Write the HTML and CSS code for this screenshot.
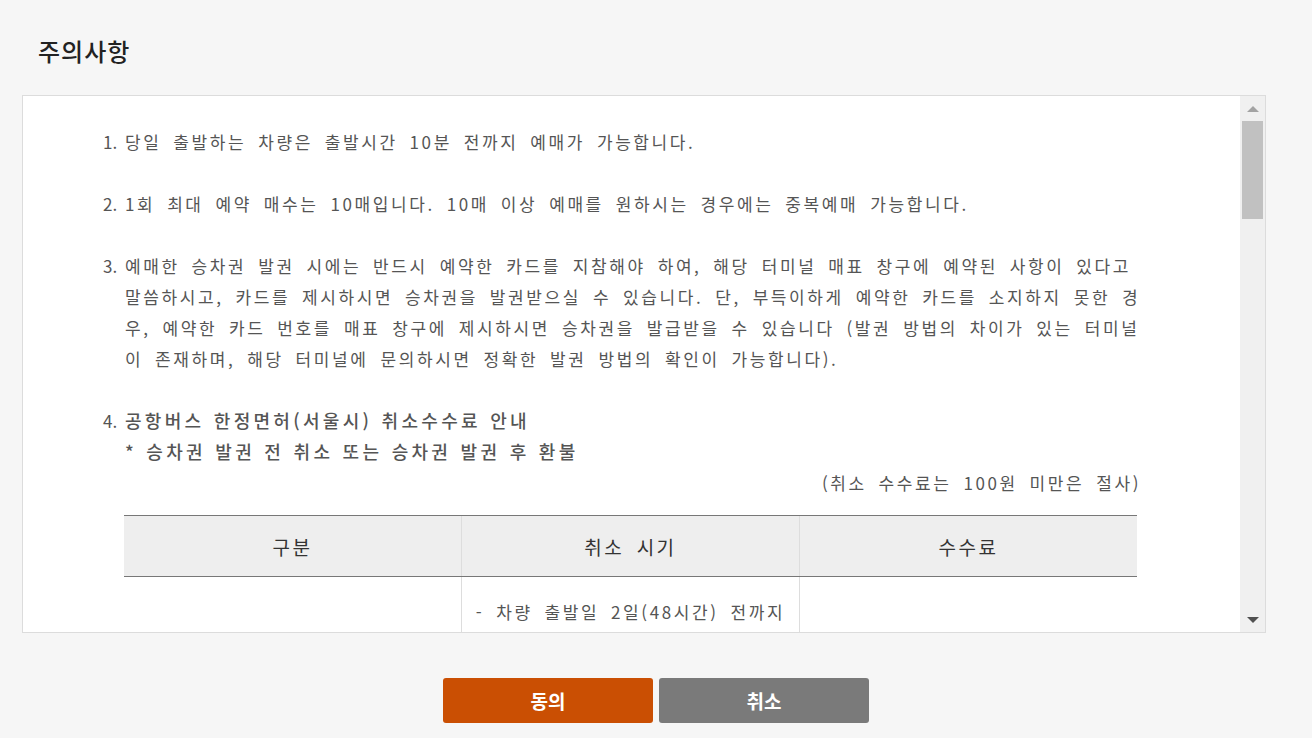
FILE: index.html
```html
<!DOCTYPE html>
<html lang="ko">
<head>
    <meta charset="UTF-8">
    <meta name="viewport" content="width=device-width, initial-scale=1.0">
    <title>주의사항</title>
    <link rel="stylesheet" href="styles.css">
</head>
<body>
    <div class="page">
        <h2 class="title">주의사항</h2>

        <div class="terms-box">
            <div class="terms-body">
                <ol class="terms">
                    <li><span class="num">1.</span><p>당일 출발하는 차량은 출발시간 10분 전까지 예매가 가능합니다.</p></li>
                    <li><span class="num">2.</span><p>1회 최대 예약 매수는 10매입니다. 10매 이상 예매를 원하시는 경우에는 중복예매 가능합니다.</p></li>
                    <li><span class="num">3.</span><p>예매한 승차권 발권 시에는 반드시 예약한 카드를 지참해야 하여, 해당 터미널 매표 창구에 예약된 사항이 있다고<br>말씀하시고, 카드를 제시하시면 승차권을 발권받으실 수 있습니다. 단, 부득이하게 예약한 카드를 소지하지 못한 경<br>우, 예약한 카드 번호를 매표 창구에 제시하시면 승차권을 발급받을 수 있습니다 (발권 방법의 차이가 있는 터미널<br>이 존재하며, 해당 터미널에 문의하시면 정확한 발권 방법의 확인이 가능합니다).</p></li>
                    <li class="fee">
                        <span class="num">4.</span>
                        <div class="fee-body">
                            <p class="fee-title">공항버스 한정면허(서울시) 취소수수료 안내</p>
                            <p class="fee-title">* 승차권 발권 전 취소 또는 승차권 발권 후 환불</p>
                            <div class="fee-detail">
                                <p class="fee-note">(취소 수수료는 100원 미만은 절사)</p>
                                <table class="fee-table">
                                    <thead>
                                        <tr>
                                            <th>구분</th>
                                            <th>취소 시기</th>
                                            <th>수수료</th>
                                        </tr>
                                    </thead>
                                    <tbody>
                                        <tr>
                                            <td></td>
                                            <td>- 차량 출발일 2일(48시간) 전까지</td>
                                            <td></td>
                                        </tr>
                                    </tbody>
                                </table>
                            </div>
                        </div>
                    </li>
                </ol>
            </div>
            <div class="scrollbar">
                <div class="sb-btn"><span class="arrow-up"></span></div>
                <div class="sb-track"><div class="sb-thumb"></div></div>
                <div class="sb-btn"><span class="arrow-down"></span></div>
            </div>
        </div>

        <div class="buttons">
            <button class="btn btn-agree">동의</button>
            <button class="btn btn-cancel">취소</button>
        </div>
    </div>
</body>
</html>
```

FILE: styles.css
```css
body {
    margin: 0;
    padding: 0;
    background-color: #f6f6f6;
    font-family: "Noto Sans CJK KR", "Noto Sans", sans-serif;
    color: #555;
}
.page {
    padding: 0 46px 0 22px;
}
.title {
    margin: 0 0 29px;
    padding: 36px 0 0 16px;
    font-size: 24px;
    line-height: 30px;
    font-weight: 500;
    letter-spacing: 1px;
    color: #222;
}
.terms-box {
    display: flex;
    height: 536px;
    background-color: white;
    border: 1px solid #dcdcdc;
}
.terms-body {
    flex: 1;
    overflow: hidden;
    padding: 30px 0 0 80px;
}
.terms {
    list-style: none;
    margin: 0;
    padding: 0;
    width: 1070px;
}
.terms li {
    display: flex;
    margin-bottom: 31px;
    font-size: 17px;
    line-height: 31px;
    letter-spacing: 2.6px;
    word-spacing: 4.5px;
}
.terms p {
    margin: 0;
}
.num {
    flex: none;
    width: 22px;
    letter-spacing: 0;
}
.fee-body {
    flex: 1;
    min-width: 0;
}
.terms .fee-title {
    font-size: 18px;
    font-weight: 500;
    letter-spacing: 3.3px;
    word-spacing: 1px;
    color: #555;
}
.fee-detail {
    width: 1016px;
}
.terms .fee-note {
    text-align: right;
    margin-bottom: 17px;
}
.fee-table {
    width: 1013px;
    margin-left: -1px;
    border-collapse: collapse;
    table-layout: fixed;
}
.fee-table th {
    height: 60px;
    padding: 0;
    background-color: #eeeeee;
    border-top: 1px solid #777;
    border-bottom: 1px solid #777;
    border-left: 1px solid #ddd;
    font-size: 19px;
    font-weight: normal;
    letter-spacing: 2.5px;
    color: #333;
}
.fee-table td {
    padding: 19px 0;
    border: 1px solid #ddd;
    border-top: none;
    text-align: center;
    vertical-align: middle;
}
.fee-table th:first-child,
.fee-table td:first-child {
    border-left: none;
}
.fee-table th:last-child,
.fee-table td:last-child {
    border-right: none;
}
.scrollbar {
    flex: none;
    width: 25px;
    display: flex;
    flex-direction: column;
    background-color: #f0f0f0;
}
.sb-btn {
    height: 25px;
    display: flex;
    align-items: center;
    justify-content: center;
}
.sb-track {
    flex: 1;
}
.sb-thumb {
    height: 98px;
    margin: 0 2px;
    background-color: #c1c1c1;
}
.arrow-up {
    width: 0;
    height: 0;
    border-left: 6px solid transparent;
    border-right: 6px solid transparent;
    border-bottom: 6px solid #a3a3a3;
}
.arrow-down {
    width: 0;
    height: 0;
    border-left: 6px solid transparent;
    border-right: 6px solid transparent;
    border-top: 6px solid #505050;
}
.buttons {
    display: flex;
    justify-content: center;
    gap: 6px;
    margin: 45px 0 0 24px;
}
.btn {
    width: 210px;
    height: 45px;
    border: none;
    border-radius: 3px;
    color: white;
    font-family: "Noto Sans CJK KR", "Noto Sans", sans-serif;
    font-size: 19px;
    font-weight: bold;
    cursor: pointer;
}
.btn-agree {
    background-color: #ca4f03;
}
.btn-cancel {
    background-color: #7a7a7a;
}
```
